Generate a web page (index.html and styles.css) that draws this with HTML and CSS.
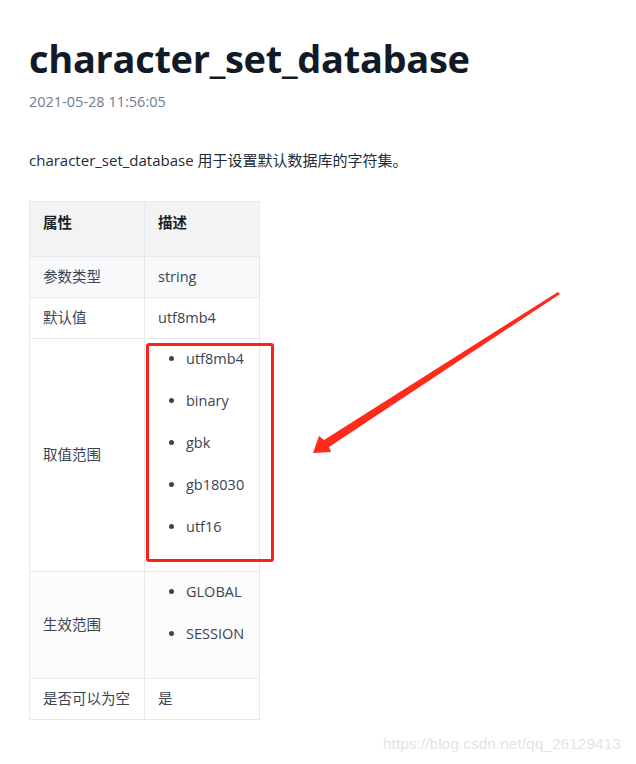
FILE: index.html
```html
<!DOCTYPE html>
<html lang="zh-CN">
<head>
<meta charset="utf-8">
<title>character_set_database</title>
<link rel="stylesheet" href="styles.css">
</head>
<body>
<article class="post">
  <h1 class="title">character_set_database</h1>
  <div class="date">2021-05-28 11:56:05</div>
  <p class="intro">character_set_database 用于设置默认数据库的字符集。</p>
  <table class="props">
    <thead>
      <tr><th class="c1">属性</th><th class="c2">描述</th></tr>
    </thead>
    <tbody>
      <tr class="tint"><td>参数类型</td><td>string</td></tr>
      <tr><td>默认值</td><td>utf8mb4</td></tr>
      <tr><td>取值范围</td><td><ul class="vals"><li>utf8mb4</li><li>binary</li><li>gbk</li><li>gb18030</li><li>utf16</li></ul></td></tr>
      <tr class="tint2"><td>生效范围</td><td><ul class="vals"><li>GLOBAL</li><li>SESSION</li></ul></td></tr>
      <tr><td>是否可以为空</td><td>是</td></tr>
    </tbody>
  </table>
</article>
<div class="mark-box"></div>
<svg class="arrow" width="636" height="764" viewBox="0 0 636 764">
  <polygon points="313,453 319,436 324,440 558,292 560,294 329,447 331,452" fill="#ff2a1a"/>
</svg>
<div class="watermark">https://blog.csdn.net/qq_26129413</div>
</body>
</html>
```
FILE: styles.css
```css
html, body {
  margin: 0;
  padding: 0;
  background: #fff;
}
body {
  font-family: "Open Sans", "Noto Sans CJK SC", sans-serif;
  color: #2c3440;
  width: 636px;
  height: 764px;
  overflow: hidden;
  position: relative;
}
.post {
  padding: 31px 0 0 29px;
}
.title {
  margin: 0;
  font-size: 38px;
  line-height: 54px;
  font-weight: 700;
  color: #111a26;
  letter-spacing: -0.3px;
}
.date {
  margin-top: 7px;
  font-size: 14.5px;
  line-height: 20px;
  color: #6e7c8c;
}
.intro {
  margin: 38px 0 0;
  font-size: 15px;
  line-height: 20px;
  color: #222b36;
}
.props {
  margin-top: 31px;
  border-collapse: collapse;
  font-size: 14.5px;
  line-height: 21px;
  color: #3a4452;
}
.props th, .props td {
  border: 1px solid #e8e9ec;
  text-align: left;
  padding: 9px 12px 10px 13px;
}
.props th {
  background: #f3f3f3;
  font-weight: 700;
  color: #1a1f26;
  vertical-align: top;
  padding-top: 10px;
  padding-bottom: 23px;
}
.props .c1 { width: 89px; }
.props .c2 { width: 89px; }
.props td { vertical-align: middle; }
.props tr.tint td { background: #f8f9fb; }
.props tr.tint2 td { background: #fcfcfd; }
.vals {
  margin: 0;
  padding: 0 0 3px 28px;
}
.vals li {
  margin-bottom: 21px;
}
.mark-box {
  position: absolute;
  left: 146px;
  top: 343px;
  width: 122px;
  height: 213px;
  border: 3px solid #ff1f1a;
  border-radius: 3px;
}
.arrow {
  position: absolute;
  left: 0;
  top: 0;
}
.watermark {
  position: absolute;
  left: 383px;
  top: 735px;
  font-family: "Liberation Sans", sans-serif;
  font-size: 15.5px;
  color: #e4e4e4;
}
```
